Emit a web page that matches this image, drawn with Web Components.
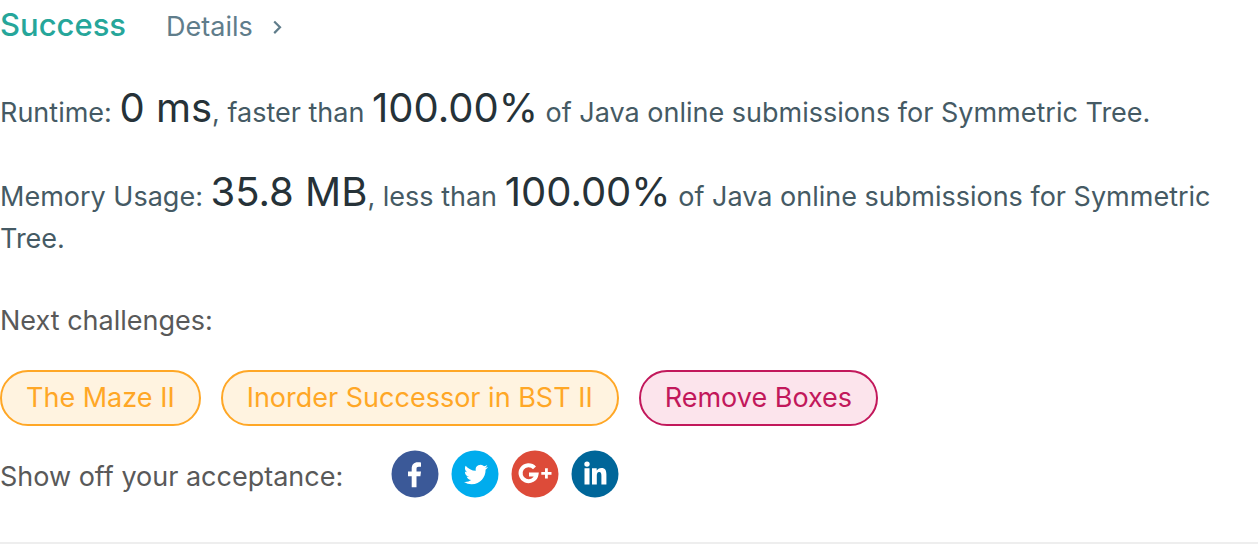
<!DOCTYPE html>
<html lang="en">
<head>
<meta charset="utf-8">
<meta name="viewport" content="width=device-width, initial-scale=1">
<title>Submission result</title>
<style>
  body { margin: 0; background: #fff; font: 27px/42px Inter, "Liberation Sans", sans-serif; color: #595959; }
</style>
</head>
<body>
<submission-result></submission-result>

<script>
const define = (name, html) => customElements.define(name, class extends HTMLElement {
  constructor() {
    super();
    const template = document.createElement('template');
    template.innerHTML = html;
    this.attachShadow({ mode: 'open' }).append(template.content.cloneNode(true));
  }
});

define('result-header', `
  <style>
    :host { display: flex; align-items: baseline; gap: 40px; line-height: 50px; }
    h1 { margin: 0; font-size: 31px; font-weight: 500; color: #26a69a; }
    a { display: flex; align-items: center; gap: 20px; color: #607d8b; text-decoration: none; }
    svg { display: block; width: 9px; height: 14px; }
  </style>
  <h1><slot></slot></h1>
  <a href="#details">Details
    <svg viewBox="0 0 9 14" fill="none" stroke="currentColor" stroke-width="2.2" aria-hidden="true"><path d="M1.200 1.500 7 7.300 1.200 13.100"/></svg>
  </a>`);

define('result-stat', `
  <style>
    :host { display: block; color: #455a64; }
    p { margin: 0; }
    ::slotted(b) { font-size: 40px; line-height: 1px; font-weight: 400; color: #263238; }
  </style>
  <p><slot></slot></p>`);

customElements.define('challenge-tag', class extends HTMLElement {
  constructor() {
    super();
    this.attachShadow({ mode: 'open' }).innerHTML = `
      <style>
        :host { display: block; --tone: #ffa726; --fill: #fff3e0; }
        :host([level="hard"]) { --tone: #c2185b; --fill: #fce4ec; }
        a { display: block; padding: 5px 24px; border: 2px solid var(--tone); border-radius: 28px;
            background: var(--fill); color: var(--tone); text-decoration: none; white-space: nowrap; }
      </style>
      <a href="#challenge"><slot></slot></a>`;
  }
});

const icons = {
  facebook: ['#3b5998', 'Facebook', '<path d="M20.700 37.300V26.200H17v-4.800h3.700v-2.900c0-4 2.300-6.300 6-6.300 1.400 0 2.600.1 3.300.3v4.200h-2.200c-1.800 0-2.300.8-2.300 2.200v2.500H30l-.6 4.800h-3.900v11.100z"/>'],
  twitter: ['#00aced', 'Twitter', '<path transform="translate(13 12.500)" d="M23.953 4.570a10 10 0 01-2.825.775 4.958 4.958 0 002.163-2.723c-.951.555-2.005.959-3.127 1.184a4.920 4.920 0 00-8.384 4.482C7.690 8.095 4.067 6.130 1.640 3.162a4.822 4.822 0 00-.666 2.475c0 1.710.870 3.213 2.188 4.096a4.904 4.904 0 01-2.228-.616v.060a4.923 4.923 0 003.946 4.827 4.996 4.996 0 01-2.212.085 4.936 4.936 0 004.604 3.417 9.867 9.867 0 01-6.102 2.105c-.390 0-.779-.023-1.170-.067a13.995 13.995 0 007.557 2.209c9.053 0 13.998-7.496 13.998-13.985 0-.210 0-.420-.015-.630A9.935 9.935 0 0024 4.590z"/>'],
  google: ['#dd4b39', 'Google Plus', '<path fill="none" stroke="#fff" stroke-width="4" d="M23.500 17.800a8 8 0 1 0 2 6.600H18"/><path d="M34 18.300h2.800v3.700h3.700v2.800h-3.700v3.700H34v-3.700h-3.700V22H34z"/>'],
  linkedin: ['#006699', 'LinkedIn', '<circle cx="16" cy="14.100" r="2.700"/><path d="M13.500 18.300h5v16.300h-5zM21 18.300h4.700v2.300c.8-1.500 2.400-2.700 4.700-2.700 4 0 5 2.700 5 6.700v10h-5v-8.700c0-2.100-.2-4-2.200-4-2.100 0-2.400 1.900-2.400 3.900v8.800H21z"/>']
};

customElements.define('share-link', class extends HTMLElement {
  connectedCallback() {
    if (this.shadowRoot) return;
    const [color, name, shape] = icons[this.getAttribute('network')];
    this.attachShadow({ mode: 'open' }).innerHTML = `
      <style>
        :host, a, svg { display: block; }
        svg { width: 48px; height: 48px; fill: #fff; }
      </style>
      <a href="#share" aria-label="Share on ${name}"><svg viewBox="0 0 48 48" aria-hidden="true">
        <circle cx="24" cy="24" r="23.500" fill="${color}"/>${shape}</svg></a>`;
  }
});

define('share-bar', `
  <style>
    :host, div { display: flex; align-items: end; }
    :host { gap: 48px; }
    div { gap: 12px; }
  </style>
  <span>Show off your acceptance:</span>
  <div><slot></slot></div>`);

define('submission-result', `
  <style>
    :host { display: block; padding-bottom: 44px; border-bottom: 2px solid #eee; }
    result-header { margin-bottom: 40px; }
    result-stat + result-stat { margin-top: 42px; }
    h2 { margin: 40px 0 28px; font: inherit; }
    nav { display: flex; flex-wrap: wrap; gap: 20px; margin-bottom: 24px; }
  </style>
  <result-header>Success</result-header>
  <result-stat>Runtime: <b>0 ms</b>, faster than <b>100.00%</b> of Java online submissions for Symmetric Tree.</result-stat>
  <result-stat>Memory Usage: <b>35.8 MB</b>, less than <b>100.00%</b> of Java online submissions for Symmetric Tree.</result-stat>
  <h2>Next challenges:</h2>
  <nav aria-label="Next challenges">
    <challenge-tag>The Maze II</challenge-tag>
    <challenge-tag>Inorder Successor in BST II</challenge-tag>
    <challenge-tag level="hard">Remove Boxes</challenge-tag>
  </nav>
  <share-bar>
    <share-link network="facebook"></share-link>
    <share-link network="twitter"></share-link>
    <share-link network="google"></share-link>
    <share-link network="linkedin"></share-link>
  </share-bar>`);
</script>
</body>
</html>
